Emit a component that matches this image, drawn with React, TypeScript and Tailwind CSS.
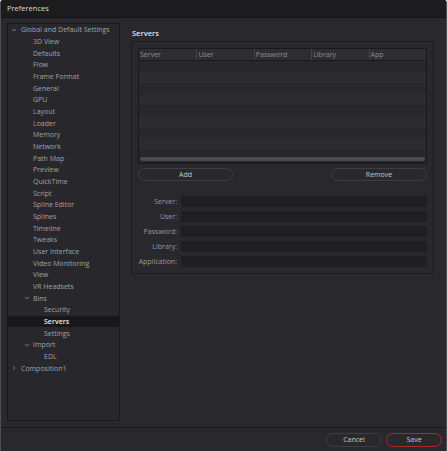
import React from 'react';

type Node = { label: string; level: number; toggle?: 'open' | 'closed'; selected?: boolean };

const tree: Node[] = [
  { label: 'Global and Default Settings', level: 0, toggle: 'open' },
  { label: '3D View', level: 1 },
  { label: 'Defaults', level: 1 },
  { label: 'Flow', level: 1 },
  { label: 'Frame Format', level: 1 },
  { label: 'General', level: 1 },
  { label: 'GPU', level: 1 },
  { label: 'Layout', level: 1 },
  { label: 'Loader', level: 1 },
  { label: 'Memory', level: 1 },
  { label: 'Network', level: 1 },
  { label: 'Path Map', level: 1 },
  { label: 'Preview', level: 1 },
  { label: 'QuickTime', level: 1 },
  { label: 'Script', level: 1 },
  { label: 'Spline Editor', level: 1 },
  { label: 'Splines', level: 1 },
  { label: 'Timeline', level: 1 },
  { label: 'Tweaks', level: 1 },
  { label: 'User Interface', level: 1 },
  { label: 'Video Monitoring', level: 1 },
  { label: 'View', level: 1 },
  { label: 'VR Headsets', level: 1 },
  { label: 'Bins', level: 1, toggle: 'open' },
  { label: 'Security', level: 2 },
  { label: 'Servers', level: 2, selected: true },
  { label: 'Settings', level: 2 },
  { label: 'Import', level: 1, toggle: 'open' },
  { label: 'EDL', level: 2 },
  { label: 'Composition1', level: 0, toggle: 'closed' },
];

const columns = ['Server', 'User', 'Password', 'Library', 'App'];
const fields = ['Server:', 'User:', 'Password:', 'Library:', 'Application:'];

function Chevron({ open }: { open: boolean }) {
  return (
    <svg width="6" height="6" viewBox="0 0 6 6" className="shrink-0">
      {open ? (
        <path d="M1 2 L3 4 L5 2" fill="none" stroke="#8a8a8f" strokeWidth="0.8" />
      ) : (
        <path d="M2 1 L4 3 L2 5" fill="none" stroke="#8a8a8f" strokeWidth="0.8" />
      )}
    </svg>
  );
}

function TreeRow({ node }: { node: Node }) {
  // chevron at 12 / 25, text at 20 / 32 / 43 (page x)
  const textLeft = node.level === 0 ? 'pl-[13px]' : node.level === 1 ? 'pl-[25px]' : 'pl-[36px]';
  const chevLeft = node.level === 0 ? 'left-[3px]' : 'left-[16px]';
  return (
    <div
      className={`relative flex items-center h-[11.68px] ${textLeft} ${
        node.selected ? 'bg-[#18181a] text-[#ececec] font-semibold' : 'text-[#a3a3a8]'
      }`}
    >
      {node.toggle && (
        <span className={`absolute ${chevLeft} top-[3px]`}>
          <Chevron open={node.toggle === 'open'} />
        </span>
      )}
      <span className="whitespace-nowrap leading-none">{node.label}</span>
    </div>
  );
}

function PillButton({ label, className = '' }: { label: string; className?: string }) {
  return (
    <div
      className={`flex items-center justify-center rounded-full border border-[#3d3d43] text-[#c9c9cc] leading-none ${className}`}
    >
      {label}
    </div>
  );
}

export default function App() {
  return (
    <div className="w-[447px] h-[451px] flex flex-col overflow-hidden bg-[#28282d] border-x border-[#4e4e53] rounded-t-[3px] font-['Open_Sans',sans-serif] text-[7px]">
      <div className="h-[18px] shrink-0 flex items-center pl-[6px] bg-[#1c1c1e] border-b border-[#131315] text-[7.5px] text-[#dadada]">
        Preferences
      </div>

      <div className="flex-1 flex pl-[6px] pt-[5px] pb-[6px]">
        <div className="w-[113px] h-full border border-[#19191b] bg-[#27272c]">
          {tree.map((n) => (
            <TreeRow key={n.label} node={n} />
          ))}
        </div>

        <div className="ml-[11px] w-[303px] flex flex-col">
          <div className="h-[18px] flex items-center pl-[1px] pt-[4px] text-[7.5px] font-semibold text-[#e2e2e2]">
            Servers
          </div>
          <div className="h-[233px] border border-[#1b1b1d] rounded-[2px] px-[6px] pt-[6px]">
            <div className="h-[116px] flex flex-col border border-[#1a1a1c] bg-[#252529]">
              <div className="h-[12px] shrink-0 flex bg-[#2d2d32] border-b border-[#1a1a1c] text-[#8f8f94]">
                {columns.map((c, i) => (
                  <div
                    key={c}
                    className={`w-[58.3px] flex items-center pl-[1px] leading-none ${
                      i > 0 ? 'border-l border-[#44444a]' : ''
                    }`}
                  >
                    {c}
                  </div>
                ))}
              </div>
              <div className="flex-1 flex flex-col overflow-hidden">
                {Array.from({ length: 9 }).map((_, i) => (
                  <div
                    key={i}
                    className={`h-[11px] shrink-0 ${i % 2 === 0 ? 'bg-[#27272c]' : 'bg-[#2b2b30]'}`}
                  />
                ))}
              </div>
              <div className="h-[7px] shrink-0 px-[1px] pt-[1px]">
                <div className="h-[4px] rounded-full bg-[#4b4b50]" />
              </div>
            </div>

            <div className="flex justify-between mt-[4px]">
              <PillButton label="Add" className="w-[95px] h-[13px]" />
              <PillButton label="Remove" className="w-[96px] h-[13px]" />
            </div>

            <div className="flex flex-col gap-[4px] mt-[15px]">
              {fields.map((f) => (
                <div key={f} className="flex items-center h-[11px]">
                  <div className="w-[42px] text-right text-[#9b9b9f] leading-none pr-[3px]">{f}</div>
                  <div className="flex-1 h-full ml-[1px] bg-[#1f1f22] rounded-[1px]" />
                </div>
              ))}
            </div>
          </div>
        </div>
      </div>

      <div className="h-[24px] shrink-0 flex items-center justify-end gap-[4px] pr-[4px] border-t border-[#1a1a1c]">
        <PillButton label="Cancel" className="w-[56px] h-[14px]" />
        <PillButton label="Save" className="w-[56px] h-[14px] !border-[#b3262b]" />
      </div>
    </div>
  );
}
